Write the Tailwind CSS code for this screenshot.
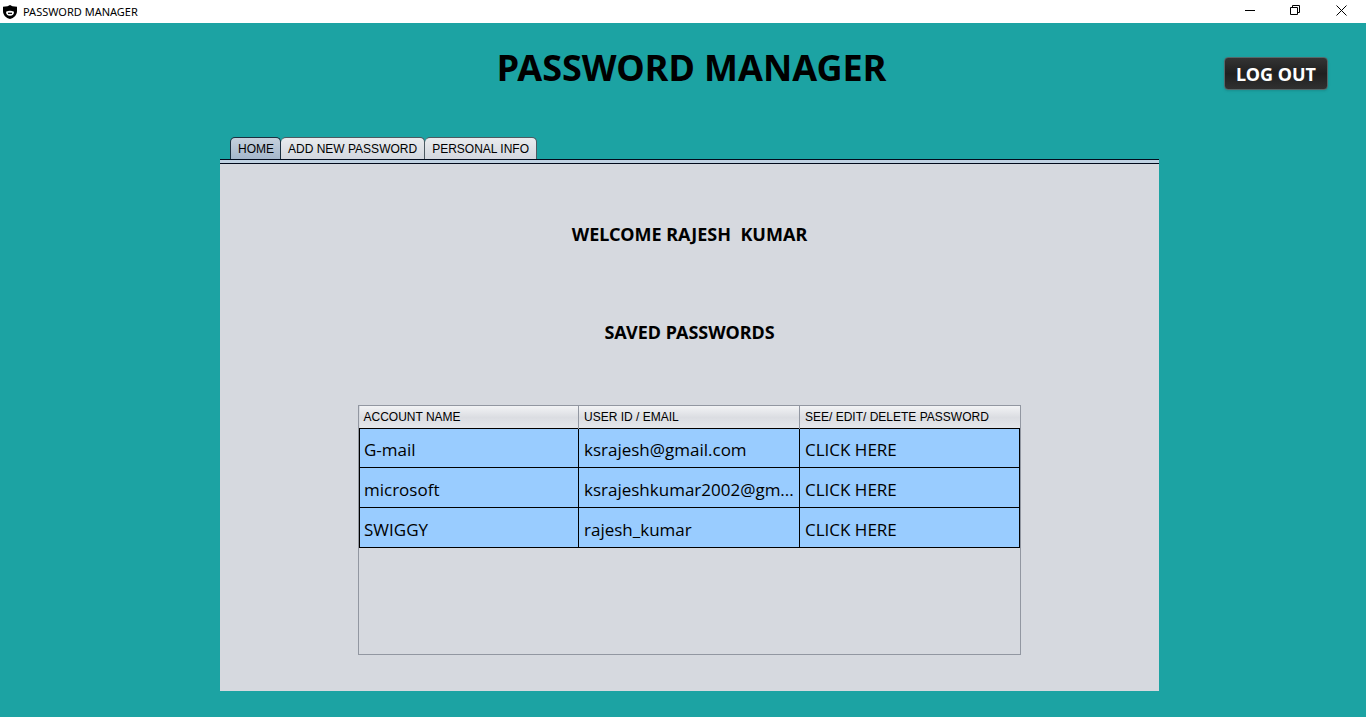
<!DOCTYPE html>
<html lang="en">
<head>
<meta charset="utf-8">
<meta name="viewport" content="width=device-width, initial-scale=1">
<title>PASSWORD MANAGER</title>
<script src="https://cdn.jsdelivr.net/npm/@tailwindcss/browser@4"></script>
</head>
<body class="flex min-h-screen flex-col bg-[#1ca3a3] font-['Noto_Sans',sans-serif] text-black">
  <!-- Window title bar -->
  <div class="flex h-[23px] items-center bg-white pr-[2px] pl-[3px]">
    <svg class="size-[14px]" viewBox="0 0 14 14" aria-hidden="true">
      <path d="M7 0 L9.500 1.200 L14 1.800 V6 C14 10 11 13 7 14 C3 13 0 10 0 6 V1.800 L4.500 1.200 Z" fill="#000"/>
      <path d="M3 6.800 Q7 4.600 11 6.800 A4 4 0 0 1 3 6.800 Z" fill="#fff"/>
      <path d="M5 8.300 H9" stroke="#000" stroke-width="1.200"/>
    </svg>
    <span class="ml-[6px] flex-1 text-[11px] leading-4">PASSWORD MANAGER</span>
    <div class="flex h-full">
      <button type="button" aria-label="Minimize" class="flex w-[46px] items-center justify-center pb-[2px]">
        <svg class="h-[11px] w-[11px]" viewBox="0 0 11 11" stroke="#000"><path d="M1 5.500 H11"/></svg>
      </button>
      <button type="button" aria-label="Restore" class="flex w-[46px] items-center justify-center pb-[2px]">
        <svg class="h-[11px] w-[11px]" viewBox="0 0 11 11" fill="none" stroke="#000"><path d="M.5 2.500 H7.500 V9.500 H.5 Z M2.500 2.500 V.5 H9.500 V7.500 H7.500"/></svg>
      </button>
      <button type="button" aria-label="Close" class="flex w-[46px] items-center justify-center pb-[2px]">
        <svg class="h-[11px] w-[11px]" viewBox="0 0 11 11" stroke="#000"><path d="M.5 .5 L10.500 10.500 M10.500 .5 L.5 10.500"/></svg>
      </button>
    </div>
  </div>

  <header class="grid h-[114px] grid-cols-[1fr_auto_1fr] items-start pr-[38px] pl-[55px]">
    <h1 class="col-start-2 mt-[21px] text-[36px] leading-[48px] font-bold">PASSWORD MANAGER</h1>
    <button type="button" class="mt-[34px] h-[33px] justify-self-end rounded-[4px] border border-[#56686a] bg-linear-to-b from-[#343434] via-[#202020] to-[#303030] px-[11px] text-[18px] leading-6 font-bold text-white shadow-sm">LOG OUT</button>
  </header>

  <main class="flex flex-1 flex-col pr-[207px] pb-[26px] pl-[220px]">
    <div role="tablist" class="flex h-[22px] pl-[10px] font-['Liberation_Sans',Arial,sans-serif] text-[12px] leading-[22px]">
      <button type="button" role="tab" aria-selected="true" class="rounded-t-[5px] border border-b-0 border-[#1c2f3f] bg-linear-to-b from-[#c5d0dc] to-[#a5b7cb] pr-[6px] pl-[7px]">HOME</button>
      <button type="button" role="tab" aria-selected="false" class="rounded-t-[5px] border border-b-0 border-l-0 border-[#4d5a62] bg-linear-to-b from-[#e9ebee] to-[#d3d7df] px-[7px]">ADD NEW PASSWORD</button>
      <button type="button" role="tab" aria-selected="false" class="rounded-t-[5px] border border-b-0 border-l-0 border-[#4d5a62] bg-linear-to-b from-[#e9ebee] to-[#d3d7df] px-[7px]">PERSONAL INFO</button>
    </div>
    <div class="h-[5px] border-y border-[#020a1c] bg-[#c0d2e2]"></div>
    <section role="tabpanel" class="flex flex-1 flex-col items-center bg-[#d6d9df] pb-[36px]">
      <h2 class="mt-[58px] text-[18px] leading-6 font-bold whitespace-pre">WELCOME RAJESH  KUMAR</h2>
      <h2 class="mt-[74px] text-[18px] leading-6 font-bold">SAVED PASSWORDS</h2>
      <div class="mt-[61px] w-full max-w-[663px] flex-1 border border-[#9297a1]">
        <table class="w-full table-fixed border-collapse text-left">
          <colgroup><col class="w-[219px]"><col class="w-[221px]"><col></colgroup>
          <thead class="bg-linear-to-b from-[#f2f3f5] via-[#dbdde2] to-[#e6e8ec] font-['Liberation_Sans',Arial,sans-serif] text-[12px] leading-[22px]">
            <tr class="h-[22px]">
              <th class="border-r border-[#9297a1] p-0 pl-[4px] font-normal">ACCOUNT NAME</th>
              <th class="border-r border-[#9297a1] p-0 pl-[5px] font-normal">USER ID / EMAIL</th>
              <th class="p-0 pl-[5px] font-normal">SEE/ EDIT/ DELETE PASSWORD</th>
            </tr>
          </thead>
          <tbody class="border border-black bg-[#99ccff] font-['Open_Sans',sans-serif] text-[17px] leading-6">
            <tr class="h-[39px]">
              <td class="truncate border border-black px-[4px] pt-[3px] pb-0">G-mail</td>
              <td class="truncate border border-black px-[5px] pt-[3px] pb-0">ksrajesh@gmail.com</td>
              <td class="truncate border border-black px-[5px] pt-[3px] pb-0"><a href="#gmail">CLICK HERE</a></td>
            </tr>
            <tr class="h-[40px]">
              <td class="truncate border border-black px-[4px] pt-[4px] pb-0">microsoft</td>
              <td class="border border-black pt-[4px] pr-0 pb-0 pl-[5px] whitespace-nowrap">ksrajeshkumar2002@gm...</td>
              <td class="truncate border border-black px-[5px] pt-[4px] pb-0"><a href="#microsoft">CLICK HERE</a></td>
            </tr>
            <tr class="h-[40px]">
              <td class="truncate border border-black px-[4px] pt-[4px] pb-0">SWIGGY</td>
              <td class="truncate border border-black px-[5px] pt-[4px] pb-0">rajesh_kumar</td>
              <td class="truncate border border-black px-[5px] pt-[4px] pb-0"><a href="#swiggy">CLICK HERE</a></td>
            </tr>
          </tbody>
        </table>
      </div>
    </section>
  </main>
</body>
</html>
